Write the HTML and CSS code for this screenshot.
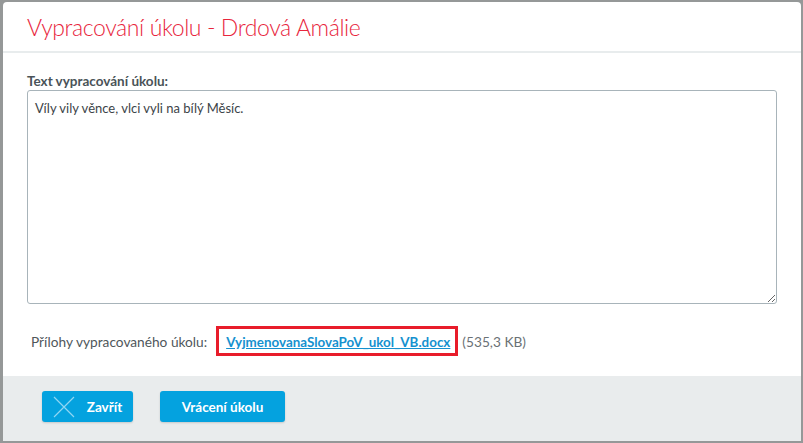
FILE: index.html
```html
<!DOCTYPE html>
<html>
<head>
  <title>Vypracování úkolu</title>
  <link rel="stylesheet" href="styles.css">
</head>
<body>
  <div class="dialog">
    <header class="dialog-head">
      <h1>Vypracování úkolu - Drdová Amálie</h1>
    </header>
    <main class="dialog-body">
      <label class="field-label" for="reseni">Text vypracování úkolu:</label>
      <textarea id="reseni" class="answer">Víly vily věnce, vlci vyli na bílý Měsíc.</textarea>
      <div class="attachments">
        <span class="att-label">Přílohy vypracovaného úkolu:</span>
        <span class="att-box"><a href="#">VyjmenovanaSlovaPoV_ukol_VB.docx</a></span>
        <span class="att-size">(535,3 KB)</span>
      </div>
    </main>
    <footer class="dialog-foot">
      <button class="btn">
        <svg class="btn-icon" width="22" height="22" viewBox="0 0 22 22"><path d="M1 1 L21 21 M21 1 L1 21" stroke="#8fd6f3" stroke-width="1.2" fill="none"/></svg>
        Zavřít
      </button>
      <button class="btn btn-wide">Vrácení úkolu</button>
    </footer>
  </div>
</body>
</html>
```

FILE: styles.css
```css
body {
  margin: 0;
  padding: 2px 2px 0 3px;
  background: #959898;
  font-family: 'Lato', 'Open Sans', sans-serif;
  height: 443px;
  box-sizing: border-box;
  overflow: hidden;
}
.dialog {
  background: #fff;
  border-radius: 4px 4px 0 0;
  height: 439px;
  display: flex;
  flex-direction: column;
}
.dialog-head {
  height: 49px;
  border-bottom: 2px solid #e8eced;
  padding: 0 24px;
  display: flex;
  align-items: center;
}
.dialog-head h1 {
  margin: 0;
  font-size: 23px;
  font-weight: 300;
  color: #e8263d;
  letter-spacing: -0.4px;
}
.dialog-body {
  padding: 20px 24px 0;
  flex: 1;
}
.field-label {
  display: block;
  font-size: 13.5px;
  font-weight: bold;
  color: #4a5358;
  margin-bottom: 1px;
}
.answer {
  display: block;
  width: 750px;
  height: 214px;
  box-sizing: border-box;
  border: 1px solid #a8b4ba;
  border-radius: 3px;
  padding: 9px 7px;
  font-family: inherit;
  font-size: 13px;
  color: #3c4448;
  resize: vertical;
  margin: 0;
}
.attachments {
  display: flex;
  align-items: center;
  margin-top: 22px;
  padding-left: 4px;
  font-size: 13.7px;
}
.att-label {
  color: #4f575b;
  margin-right: 9px;
}
.att-box {
  border: 3px solid #e81c2a;
  padding: 4px 5px 3px 7px;
}
.att-box a {
  color: #1591cf;
  font-size: 13.4px;
  font-weight: bold;
  text-decoration: underline;
}
.att-size {
  color: #6a7175;
  margin-left: 4px;
}
.dialog-foot {
  background: #e9eced;
  height: 65px;
  padding: 15px 39px 0;
  box-sizing: border-box;
  display: flex;
  align-items: flex-start;
  gap: 27px;
}
.btn {
  height: 31px;
  width: 91px;
  border: none;
  border-radius: 3px;
  background: #04a2df;
  color: #fff;
  font-family: inherit;
  font-size: 13.5px;
  font-weight: bold;
  display: flex;
  align-items: center;
  justify-content: center;
  gap: 12px;
  padding: 0 8px;
  box-shadow: 0 1px 2px rgba(0, 0, 0, 0.15);
}
.btn-icon {
  flex: none;
}
.btn-wide {
  width: 125px;
}
```
